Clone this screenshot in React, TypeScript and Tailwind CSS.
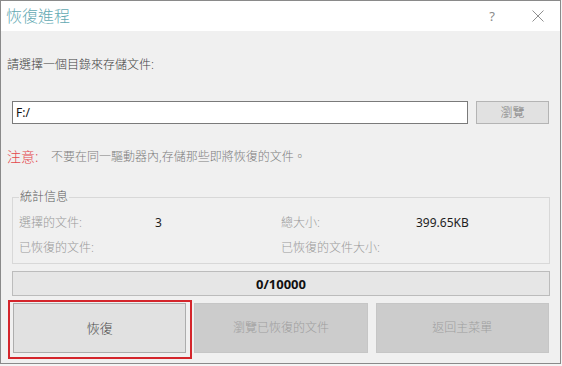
import React from "react";

const stats = [
  { label: "選擇的文件:", value: "3", label2: "總大小:", value2: "399.65KB" },
  { label: "已恢復的文件:", value: "", label2: "已恢復的文件大小:", value2: "" },
];

export default function App() {
  return (
    <div className="relative w-[562px] h-[366px] bg-[#f4f4f4] font-['Noto_Sans','Noto_Sans_CJK_TC',sans-serif] text-[12px] leading-[16px]">
      <div className="flex flex-col w-[561px] h-[364px] border border-[#8a8a8a] bg-[#f0f0f0]">
        {/* title bar */}
        <div className="flex items-center h-[30px] bg-white">
          <span className="ml-[5px] text-[16px] leading-[20px] font-light text-[#62a9b2]">恢復進程</span>
          <span className="ml-auto text-[13px] text-[#8a8a8a]">?</span>
          <svg className="ml-[37px] mr-[16px]" width="12" height="12" viewBox="0 0 12 12">
            <path d="M0.5 0.5 L11.5 11.5 M11.5 0.5 L0.5 11.5" stroke="#8f8f8f" strokeWidth="1" />
          </svg>
        </div>

        <div className="mt-[26px] ml-[6px] font-light text-[#3f3f3f]">請選擇一個目錄來存儲文件:</div>

        <div className="flex mt-[28px] ml-[11px] h-[23px]">
          <div className="flex items-center w-[456px] bg-white border border-[#7a7a7a] pl-[3px] text-[#111]">
            F:/
          </div>
          <button
            type="button"
            className="ml-[8px] w-[73px] bg-[#e1e1e1] border border-[#b4b4b4] font-light text-[#7e7e7e]"
          >
            瀏覽
          </button>
        </div>

        <div className="flex mt-[25px] ml-[6px] font-light">
          <span className="w-[44px] text-[14px] text-[#e4474c]">注意:</span>
          <span className="text-[#7e7e7e]">不要在同一驅動器內,存儲那些即將恢復的文件。</span>
        </div>

        <fieldset className="mt-[24px] ml-[11px] w-[538px] border border-[#d8d8d8] px-[6px] pb-[7px] font-light">
          <legend className="px-[1px] text-[#5a5a5a]">統計信息</legend>
          <div className="grid grid-cols-[136px_126px_135px_1fr] gap-y-[9px] mt-[10px]">
            {stats.map((s) => (
              <React.Fragment key={s.label}>
                <span className="text-[#9a9a9a]">{s.label}</span>
                <span className="font-normal text-[#1e1e1e]">{s.value}</span>
                <span className="text-[#9a9a9a]">{s.label2}</span>
                <span className="font-normal text-[#1e1e1e]">{s.value2}</span>
              </React.Fragment>
            ))}
          </div>
        </fieldset>

        <div className="flex items-center justify-center mt-[7px] ml-[11px] w-[538px] h-[25px] bg-[#e6e6e6] border border-[#bcbcbc] text-[13px] font-bold text-[#111]">
          0/10000
        </div>

        <div className="grid grid-cols-3 gap-[8px] mt-[7px] ml-[12px] w-[536px] h-[50px] font-light">
          <button type="button" className="bg-[#e1e1e1] border border-[#adadad] text-[13px] text-[#4a4a4a]">
            恢復
          </button>
          <button type="button" className="bg-[#cccccc] border border-[#c6c6c6] text-[#9e9e9e]">
            瀏覽已恢復的文件
          </button>
          <button type="button" className="bg-[#cccccc] border border-[#c6c6c6] text-[#9e9e9e]">
            返回主菜單
          </button>
        </div>
      </div>

      {/* highlight outline drawn over the first button */}
      <div className="absolute left-[8px] top-[300px] w-[184px] h-[59px] border-2 border-[#d4252b] pointer-events-none" />
    </div>
  );
}
